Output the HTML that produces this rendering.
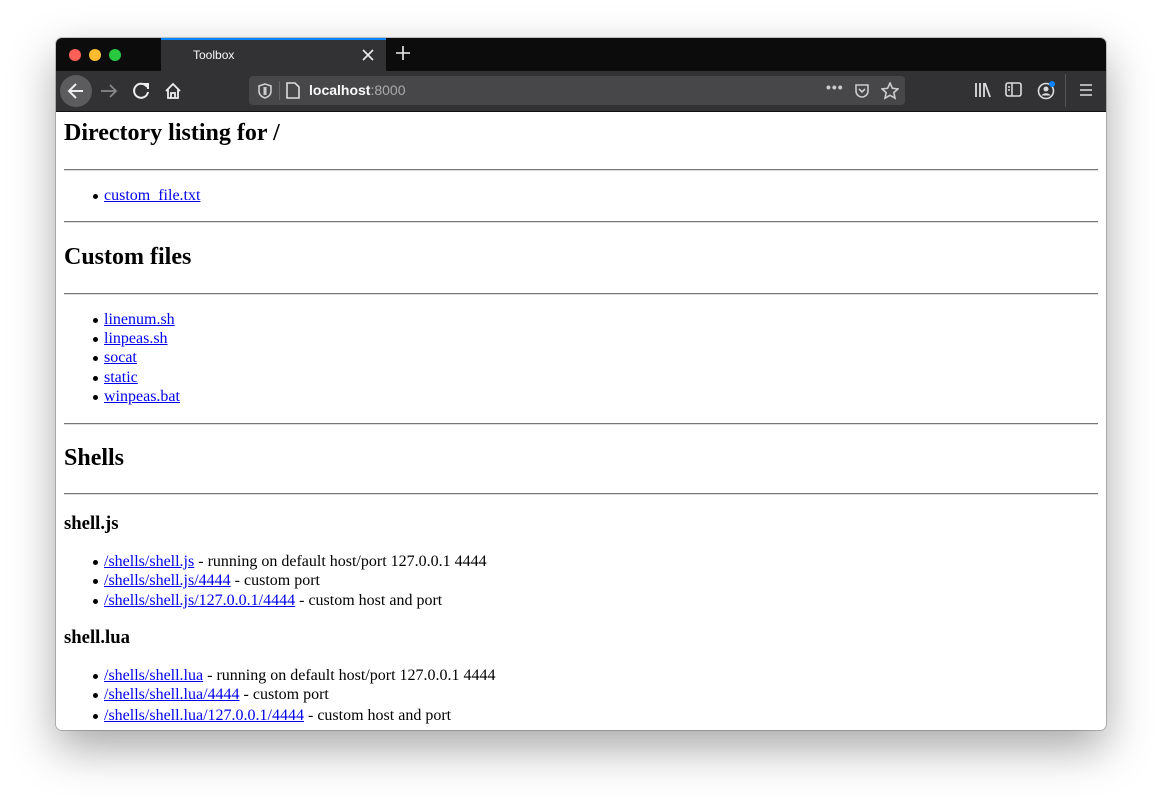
<!DOCTYPE html>
<html><head><style>
body{margin:0;width:1162px;height:804px;background:#fff;position:relative;overflow:hidden;font-family:"Liberation Serif",serif}
.win{position:absolute;left:56px;top:38px;width:1050px;height:692px;border-radius:6px;overflow:hidden;box-shadow:0 18px 45px rgba(0,0,0,.35),0 0 0 1px rgba(0,0,0,.2);background:#fff}
.tb{position:absolute;left:0;top:0;width:1050px;height:33px;background:#0c0c0d}
.tab{position:absolute;left:105px;top:0;width:225px;height:33px;background:#323234;border-top:2px solid #0a84ff;box-sizing:border-box}
.tool{position:absolute;left:0;top:33px;width:1050px;height:40px;background:#323234;border-bottom:1px solid #111}
.dot{position:absolute;top:11px;width:12px;height:12px;border-radius:50%}
.url{position:absolute;left:193px;top:5px;width:656px;height:29px;background:#474749;border-radius:4px}
.t{position:absolute;left:8px;white-space:nowrap;line-height:20px;transform:translateY(-9px)}
.h2{font-size:24px;font-weight:bold}
.h3{font-size:18.7px;font-weight:bold}
.li{font-size:16px;left:48px}
.li:before{content:"";position:absolute;left:-11px;top:8px;width:5px;height:5px;border-radius:50%;background:#000}
a{color:#00e;text-decoration:underline}
.hr{position:absolute;left:8px;width:1034px;height:0;border-top:1px solid #777;border-bottom:1px solid #ddd}
svg{position:absolute}
</style></head><body>
<div class="win">
<div class="tb">
<div class="dot" style="left:13px;background:#fe5f57"></div>
<div class="dot" style="left:33px;background:#febc2e"></div>
<div class="dot" style="left:53px;background:#28c840"></div>
<div class="tab"><span style="position:absolute;left:32px;top:8px;font:12px 'Liberation Sans',sans-serif;color:#f9f9fa">Toolbox</span>
<svg style="left:201px;top:9px" width="12" height="12"><path d="M1 1L11 11M11 1L1 11" stroke="#eee" stroke-width="1.6"/></svg></div>
<svg style="left:340px;top:8px" width="14" height="14"><path d="M7 0V14M0 7H14" stroke="#eee" stroke-width="1.6"/></svg>
</div>
<div class="tool">
<div style="position:absolute;left:4px;top:4px;width:32px;height:32px;border-radius:50%;background:#5c5c5f"></div>
<svg style="left:10px;top:10px" width="20" height="20"><path d="M17 10H4M10 3L3 10L10 17" stroke="#eee" stroke-width="2" fill="none"/></svg>
<svg style="left:43px;top:11px" width="20" height="18"><path d="M2 9H17M11 3L17 9L11 15" stroke="#888" stroke-width="1.8" fill="none"/></svg>
<svg style="left:77px;top:11px" width="18" height="18"><path d="M14 5A7 7 0 1 0 15 10" stroke="#eee" stroke-width="2" fill="none"/><path d="M10 2H15V7" stroke="#eee" stroke-width="2" fill="none"/></svg>
<svg style="left:108px;top:11px" width="18" height="18"><path d="M2 9L9 2L16 9M4 7V16H14V7M7 16V11H11V16" stroke="#eee" stroke-width="1.8" fill="none"/></svg>
<div class="url">
<svg style="left:9px;top:7px" width="14" height="16"><path d="M7 1L13 3V8C13 12 10 14 7 15C4 14 1 12 1 8V3Z" stroke="#ccc" stroke-width="1.6" fill="none"/><path d="M7 4V12" stroke="#ccc" stroke-width="3"/></svg>
<div style="position:absolute;left:30px;top:5px;width:1px;height:19px;background:#666"></div>
<svg style="left:37px;top:6px" width="14" height="17"><path d="M1 1H9L13 5V16H1Z" stroke="#ddd" stroke-width="1.6" fill="none"/></svg>
<span style="position:absolute;left:60px;top:6px;font:14px 'Liberation Sans',sans-serif;color:#f9f9fa"><b>localhost</b><span style="color:#aaa">:8000</span></span>
<span style="position:absolute;left:577px;top:3px;font:bold 14px 'Liberation Sans',sans-serif;color:#ccc;letter-spacing:1px">•••</span>
<svg style="left:605px;top:7px" width="16" height="16"><path d="M2 2H14V8A6 6 0 0 1 2 8Z" stroke="#ccc" stroke-width="1.6" fill="none"/><path d="M5 6L8 9L11 6" stroke="#ccc" stroke-width="1.6" fill="none"/></svg>
<svg style="left:632px;top:6px" width="18" height="18"><path d="M9 1L11.4 6.3L17 6.9L12.8 10.6L14 16.2L9 13.3L4 16.2L5.2 10.6L1 6.9L6.6 6.3Z" stroke="#ccc" stroke-width="1.6" fill="none"/></svg>
</div>
<svg style="left:918px;top:11px" width="18" height="16"><path d="M2 1V15M6 1V15M10 1V15M11 1L16 15" stroke="#ddd" stroke-width="1.8"/></svg>
<svg style="left:949px;top:11px" width="18" height="16"><rect x="1" y="1" width="15" height="13" rx="2" stroke="#ddd" stroke-width="1.6" fill="none"/><path d="M7 1V14M3 5H5M3 8H5" stroke="#ddd" stroke-width="1.5"/></svg>
<svg style="left:981px;top:9px" width="20" height="20"><circle cx="9" cy="11" r="7.5" stroke="#ddd" stroke-width="1.6" fill="none"/><circle cx="9" cy="9" r="2.5" fill="#ddd"/><path d="M4.5 15.5C6 12.5 12 12.5 13.5 15.5" fill="#ddd"/><circle cx="15" cy="4" r="3" fill="#0a84ff"/></svg>
<div style="position:absolute;left:1009px;top:3px;width:1px;height:33px;background:#555"></div>
<svg style="left:1023px;top:12px" width="14" height="14"><path d="M1 2H13M1 7H13M1 12H13" stroke="#ddd" stroke-width="1.6"/></svg>
</div>
<div style="position:absolute;left:0;top:74px;width:1050px;height:618px;font-size:16px">
<div class="t h2" style="top:20px">Directory listing for /</div>
<div class="hr" style="top:57px"></div>
<div class="t li" style="top:83px"><a>custom_file.txt</a></div>
<div class="hr" style="top:109px"></div>
<div class="t h2" style="top:144px">Custom files</div>
<div class="hr" style="top:181px"></div>
<div class="t li" style="top:207px"><a>linenum.sh</a></div>
<div class="t li" style="top:226px"><a>linpeas.sh</a></div>
<div class="t li" style="top:245px"><a>socat</a></div>
<div class="t li" style="top:265px"><a>static</a></div>
<div class="t li" style="top:284px"><a>winpeas.bat</a></div>
<div class="hr" style="top:311px"></div>
<div class="t h2" style="top:345px">Shells</div>
<div class="hr" style="top:381px"></div>
<div class="t h3" style="top:411px">shell.js</div>
<div class="t li" style="top:449px"><a>/shells/shell.js</a> - running on default host/port 127.0.0.1 4444</div>
<div class="t li" style="top:468px"><a>/shells/shell.js/4444</a> - custom port</div>
<div class="t li" style="top:488px"><a>/shells/shell.js/127.0.0.1/4444</a> - custom host and port</div>
<div class="t h3" style="top:525px">shell.lua</div>
<div class="t li" style="top:563px"><a>/shells/shell.lua</a> - running on default host/port 127.0.0.1 4444</div>
<div class="t li" style="top:582px"><a>/shells/shell.lua/4444</a> - custom port</div>
<div class="t li" style="top:603px"><a>/shells/shell.lua/127.0.0.1/4444</a> - custom host and port</div>
</div>
</div>
</body></html>
